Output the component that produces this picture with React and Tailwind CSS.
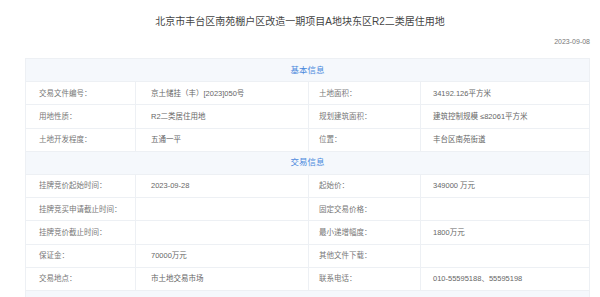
import React from 'react';

const basic = [
    ['交易文件编号：', '京土储挂（丰）[2023]050号', '土地面积：', '34192.126平方米'],
    ['用地性质：', 'R2二类居住用地', '规划建筑面积：', '建筑控制规模 ≤82061平方米'],
    ['土地开发程度：', '五通一平', '位置：', '丰台区南苑街道'],
];

const trade = [
    ['挂牌竞价起始时间：', '2023-09-28', '起始价：', '349000 万元'],
    ['挂牌竞买申请截止时间：', '', '固定交易价格：', ''],
    ['挂牌竞价截止时间：', '', '最小递增幅度：', '1800万元'],
    ['保证金：', '70000万元', '其他文件下载：', ''],
    ['交易地点：', '市土地交易市场', '联系电话：', '010-55595188、55595198'],
];

const SectionRow = ({ title }) => (
    <div className="h-[23.2px] flex items-center justify-center bg-[#f5f8fc] border-b border-[#edf0f4] text-[8.5px] text-[#4a88dc]">
        {title}
    </div>
);

const DataRow = ({ row }) => (
    <div className="h-[23.2px] flex border-b border-[#edf0f4] text-[7.5px] text-[#777]">
        <div className="w-[110px] flex items-center pl-[13px] border-r border-[#edf0f4]">{row[0]}</div>
        <div className="w-[173px] flex items-center pl-[15px] border-r border-[#edf0f4] text-[#666]">{row[1]}</div>
        <div className="w-[112px] flex items-center pl-[10px] border-r border-[#edf0f4]">{row[2]}</div>
        <div className="flex-1 flex items-center pl-[12px] text-[#666]">{row[3]}</div>
    </div>
);

export default function App() {
    return (
        <div className="w-[600px] h-[297px] overflow-hidden bg-white font-['Liberation_Sans','Noto_Sans_CJK_SC',sans-serif]">
            <div className="pt-[15px] text-center text-[10px] leading-[14px] text-[#444]">
                北京市丰台区南苑棚户区改造一期项目A地块东区R2二类居住用地
            </div>
            <div className="mt-[8px] pr-[10px] text-right text-[7px] leading-[10px] text-[#777]">2023-09-08</div>
            <div className="mt-[11px] ml-[25px] mr-[10px] border-t border-l border-r border-[#edf0f4]">
                <SectionRow title="基本信息" />
                {basic.map((r, i) => <DataRow key={i} row={r} />)}
                <SectionRow title="交易信息" />
                {trade.map((r, i) => <DataRow key={i} row={r} />)}
                <SectionRow title="" />
            </div>
        </div>
    );
}
